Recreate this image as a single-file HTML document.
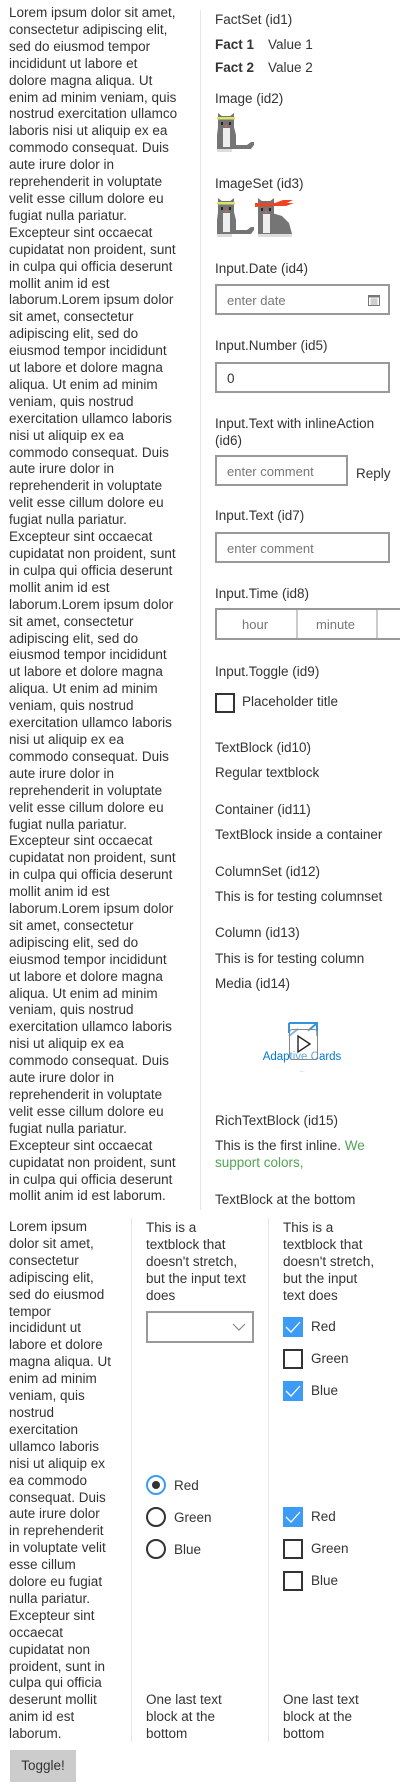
<!DOCTYPE html>
<html><head><meta charset="utf-8">
<style>
*{margin:0;padding:0;box-sizing:border-box}
body{width:400px;height:1792px;background:#fff;position:relative;overflow:hidden;font-family:"Liberation Sans",sans-serif;font-size:13.5px;color:#333;line-height:17px}
.a{position:absolute;white-space:nowrap}
.txt{position:absolute;white-space:nowrap;line-height:16.9px}
.box{position:absolute;border:2px solid #999;background:#fff}
.ph{color:#777;font-size:13px}
.cb{position:absolute;width:20px;height:20px;border:2px solid #333}
.cbc{position:absolute;width:20px;height:20px;background:#3c9cf5}
.rd{position:absolute;width:20px;height:20px;border:2px solid #333;border-radius:50%}
.vl{position:absolute;width:1px;background:#e6e6e6}
</style></head><body>

<div class="txt" style="left:9px;top:5px">Lorem ipsum dolor sit amet,<br>consectetur adipiscing elit,<br>sed do eiusmod tempor<br>incididunt ut labore et<br>dolore magna aliqua. Ut<br>enim ad minim veniam, quis<br>nostrud exercitation ullamco<br>laboris nisi ut aliquip ex ea<br>commodo consequat. Duis<br>aute irure dolor in<br>reprehenderit in voluptate<br>velit esse cillum dolore eu<br>fugiat nulla pariatur.<br>Excepteur sint occaecat<br>cupidatat non proident, sunt<br>in culpa qui officia deserunt<br>mollit anim id est<br>laborum.Lorem ipsum dolor<br>sit amet, consectetur<br>adipiscing elit, sed do<br>eiusmod tempor incididunt<br>ut labore et dolore magna<br>aliqua. Ut enim ad minim<br>veniam, quis nostrud<br>exercitation ullamco laboris<br>nisi ut aliquip ex ea<br>commodo consequat. Duis<br>aute irure dolor in<br>reprehenderit in voluptate<br>velit esse cillum dolore eu<br>fugiat nulla pariatur.<br>Excepteur sint occaecat<br>cupidatat non proident, sunt<br>in culpa qui officia deserunt<br>mollit anim id est<br>laborum.Lorem ipsum dolor<br>sit amet, consectetur<br>adipiscing elit, sed do<br>eiusmod tempor incididunt<br>ut labore et dolore magna<br>aliqua. Ut enim ad minim<br>veniam, quis nostrud<br>exercitation ullamco laboris<br>nisi ut aliquip ex ea<br>commodo consequat. Duis<br>aute irure dolor in<br>reprehenderit in voluptate<br>velit esse cillum dolore eu<br>fugiat nulla pariatur.<br>Excepteur sint occaecat<br>cupidatat non proident, sunt<br>in culpa qui officia deserunt<br>mollit anim id est<br>laborum.Lorem ipsum dolor<br>sit amet, consectetur<br>adipiscing elit, sed do<br>eiusmod tempor incididunt<br>ut labore et dolore magna<br>aliqua. Ut enim ad minim<br>veniam, quis nostrud<br>exercitation ullamco laboris<br>nisi ut aliquip ex ea<br>commodo consequat. Duis<br>aute irure dolor in<br>reprehenderit in voluptate<br>velit esse cillum dolore eu<br>fugiat nulla pariatur.<br>Excepteur sint occaecat<br>cupidatat non proident, sunt<br>in culpa qui officia deserunt<br>mollit anim id est laborum.</div>

<div class="vl" style="left:200px;top:10px;height:1200px"></div>

<div class="a" style="left:215px;top:11px">FactSet (id1)</div>
<div class="a" style="left:215px;top:36px"><b>Fact 1</b></div><div class="a" style="left:268px;top:36px">Value 1</div>
<div class="a" style="left:215px;top:59px"><b>Fact 2</b></div><div class="a" style="left:268px;top:59px">Value 2</div>
<div class="a" style="left:215px;top:90px">Image (id2)</div>
<svg class="a" style="left:215px;top:112px" width="42" height="42" viewBox="0 0 42 42">
<polygon points="3,1 8,5 3,5" fill="#757575"/><polygon points="19,1 14,5 19,5" fill="#757575"/>
<rect x="3" y="4" width="16" height="12" fill="#757575"/>
<path d="M3 15h16l2 8v14h-19v-14z" fill="#757575"/>
<rect x="8" y="16" width="7" height="19" fill="#eee"/>
<path d="M21 33h11l4-3h3v3l-3 4h-15z" fill="#757575"/>
<rect x="2" y="5" width="18" height="2.5" fill="#dce36a"/>
<rect x="6" y="10" width="2" height="3" fill="#222"/><rect x="14" y="10" width="2" height="3" fill="#222"/>
<rect x="10" y="13" width="2" height="2" fill="#e55"/>
<rect x="2" y="37" width="15" height="3" fill="#ddd"/>
</svg>
<div class="a" style="left:215px;top:175px">ImageSet (id3)</div>
<svg class="a" style="left:215px;top:197px" width="42" height="42" viewBox="0 0 42 42">
<polygon points="3,1 8,5 3,5" fill="#757575"/><polygon points="19,1 14,5 19,5" fill="#757575"/>
<rect x="3" y="4" width="16" height="12" fill="#757575"/>
<path d="M3 15h16l2 8v14h-19v-14z" fill="#757575"/>
<rect x="8" y="16" width="7" height="19" fill="#eee"/>
<path d="M21 33h11l4-3h3v3l-3 4h-15z" fill="#757575"/>
<rect x="2" y="5" width="18" height="2.5" fill="#dce36a"/>
<rect x="6" y="10" width="2" height="3" fill="#222"/><rect x="14" y="10" width="2" height="3" fill="#222"/>
<rect x="10" y="13" width="2" height="2" fill="#e55"/>
<rect x="2" y="37" width="15" height="3" fill="#ddd"/>
</svg>
<svg class="a" style="left:254px;top:197px" width="44" height="42" viewBox="0 0 44 42">
<polygon points="4,1 9,5 4,5" fill="#757575"/><polygon points="20,1 15,5 20,5" fill="#757575"/>
<rect x="4" y="4" width="16" height="13" fill="#757575"/>
<path d="M4 16h14l10 3l7 7l3 11h-34z" fill="#757575"/>
<rect x="9" y="17" width="7" height="19" fill="#eee"/>
<path d="M1 6h20l8-3h10l-6 3h7l-8 3h-12l-19 1z" fill="#ee4422"/>
<rect x="7" y="11" width="2" height="3" fill="#222"/><rect x="15" y="11" width="2" height="3" fill="#222"/>
<rect x="11" y="14" width="2" height="2" fill="#e55"/>
<rect x="4" y="37" width="34" height="3" fill="#ddd"/>
</svg>

<div class="a" style="left:215px;top:260px">Input.Date (id4)</div>
<div class="box" style="left:215px;top:284px;width:175px;height:31px"><span class="a ph" style="left:10px;top:6px">enter date</span>
<svg class="a" style="right:8px;top:8px" width="12" height="12" viewBox="0 0 12 12"><rect x="0.5" y="1.5" width="11" height="10" fill="none" stroke="#777"/><rect x="0.5" y="1.5" width="11" height="2" fill="#777"/><path d="M2 6h8M2 8h8M2 10h8M4 4v7M6 4v7M8 4v7" stroke="#999" stroke-width="0.6"/></svg></div>

<div class="a" style="left:215px;top:337px">Input.Number (id5)</div>
<div class="box" style="left:215px;top:362px;width:175px;height:31px"><span class="a" style="left:10px;top:6px">0</span></div>

<div class="a" style="left:215px;top:415px">Input.Text with inlineAction</div>
<div class="a" style="left:215px;top:432px">(id6)</div>
<div class="box" style="left:215px;top:455px;width:133px;height:31px"><span class="a ph" style="left:10px;top:6px">enter comment</span></div>
<div class="a" style="left:356px;top:465px">Reply</div>

<div class="a" style="left:215px;top:507px">Input.Text (id7)</div>
<div class="box" style="left:215px;top:532px;width:175px;height:31px"><span class="a ph" style="left:10px;top:6px">enter comment</span></div>

<div class="a" style="left:215px;top:585px">Input.Time (id8)</div>
<div class="box" style="left:215px;top:608px;width:190px;height:32px;border-right:none"><span class="a ph" style="left:25px;top:6px">hour</span><span class="a" style="left:79px;top:0;width:2px;height:28px;background:#ccc"></span><span class="a ph" style="left:99px;top:6px">minute</span><span class="a" style="left:159px;top:0;width:2px;height:28px;background:#ccc"></span></div>

<div class="a" style="left:215px;top:663px">Input.Toggle (id9)</div>
<div class="cb" style="left:215px;top:693px"></div>
<div class="a" style="left:242px;top:693px">Placeholder title</div>

<div class="a" style="left:215px;top:739px">TextBlock (id10)</div>
<div class="a" style="left:215px;top:764px">Regular textblock</div>
<div class="a" style="left:215px;top:801px">Container (id11)</div>
<div class="a" style="left:215px;top:826px">TextBlock inside a container</div>
<div class="a" style="left:215px;top:863px">ColumnSet (id12)</div>
<div class="a" style="left:215px;top:888px">This is for testing columnset</div>
<div class="a" style="left:215px;top:924px">Column (id13)</div>
<div class="a" style="left:215px;top:950px">This is for testing column</div>
<div class="a" style="left:215px;top:975px">Media (id14)</div>
<svg class="a" style="left:260px;top:1020px" width="85" height="56" viewBox="0 0 85 56">
<path d="M29 3h28v13M29 3v10M57 3l-9 8M29 16l9 -7" stroke="#0078d4" stroke-width="2" fill="none" opacity="0.8"/>
<text x="42" y="40" text-anchor="middle" font-family="Liberation Sans" font-size="11.5" fill="#0078d4">Adaptive Cards</text>
<text x="42" y="52" text-anchor="middle" font-family="Liberation Sans" font-size="3.5" fill="#0078d4">.....</text>
<rect x="29.5" y="9.5" width="28" height="30" rx="3" fill="rgba(255,255,255,0.35)" stroke="#888"/>
<path d="M38 16v16l12-8z" fill="none" stroke="#222" stroke-width="1.4"/>
</svg>

<div class="a" style="left:215px;top:1112px">RichTextBlock (id15)</div>
<div class="a" style="left:215px;top:1137px">This is the first inline. <span style="color:#54a254">We</span></div>
<div class="a" style="left:215px;top:1154px;color:#54a254">support colors,</div>
<div class="a" style="left:215px;top:1191px">TextBlock at the bottom</div>

<div class="txt" style="left:9px;top:1219px">Lorem ipsum<br>dolor sit amet,<br>consectetur<br>adipiscing elit,<br>sed do eiusmod<br>tempor<br>incididunt ut<br>labore et dolore<br>magna aliqua. Ut<br>enim ad minim<br>veniam, quis<br>nostrud<br>exercitation<br>ullamco laboris<br>nisi ut aliquip ex<br>ea commodo<br>consequat. Duis<br>aute irure dolor<br>in reprehenderit<br>in voluptate velit<br>esse cillum<br>dolore eu fugiat<br>nulla pariatur.<br>Excepteur sint<br>occaecat<br>cupidatat non<br>proident, sunt in<br>culpa qui officia<br>deserunt mollit<br>anim id est<br>laborum.</div>

<div class="vl" style="left:131px;top:1218px;height:524px"></div>
<div class="vl" style="left:268px;top:1218px;height:524px"></div>

<div class="txt" style="left:146px;top:1220px">This is a<br>textblock that<br>doesn't stretch,<br>but the input text<br>does</div>
<div class="box" style="left:146px;top:1311px;width:108px;height:32px">
<svg class="a" style="left:84px;top:10px" width="14" height="8" viewBox="0 0 14 8"><path d="M1 1l6 6 6-6" stroke="#888" fill="none" stroke-width="1.2"/></svg></div>

<div class="rd" style="left:146px;top:1475px;border-color:#3c9cf5"><span class="a" style="left:4px;top:4px;width:8px;height:8px;border-radius:50%;background:#333"></span></div>
<div class="a" style="left:174px;top:1477px">Red</div>
<div class="rd" style="left:146px;top:1507px"></div><div class="a" style="left:174px;top:1509px">Green</div>
<div class="rd" style="left:146px;top:1539px"></div><div class="a" style="left:174px;top:1541px">Blue</div>
<div class="txt" style="left:146px;top:1692px">One last text<br>block at the<br>bottom</div>

<div class="txt" style="left:283px;top:1220px">This is a<br>textblock that<br>doesn't stretch,<br>but the input<br>text does</div>
<div class="cbc" style="left:283px;top:1317px"><svg width="20" height="20"><path d="M3 10l5 5 9-10" stroke="#fff" fill="none" stroke-width="1.3"/></svg></div><div class="a" style="left:311px;top:1318px">Red</div>
<div class="cb" style="left:283px;top:1349px"></div><div class="a" style="left:311px;top:1350px">Green</div>
<div class="cbc" style="left:283px;top:1381px"><svg width="20" height="20"><path d="M3 10l5 5 9-10" stroke="#fff" fill="none" stroke-width="1.3"/></svg></div><div class="a" style="left:311px;top:1382px">Blue</div>

<div class="cbc" style="left:283px;top:1507px"><svg width="20" height="20"><path d="M3 10l5 5 9-10" stroke="#fff" fill="none" stroke-width="1.3"/></svg></div><div class="a" style="left:311px;top:1508px">Red</div>
<div class="cb" style="left:283px;top:1539px"></div><div class="a" style="left:311px;top:1540px">Green</div>
<div class="cb" style="left:283px;top:1571px"></div><div class="a" style="left:311px;top:1572px">Blue</div>
<div class="txt" style="left:283px;top:1692px">One last text<br>block at the<br>bottom</div>

<div class="a" style="left:10px;top:1750px;width:66px;height:32px;background:#ccc;text-align:center;line-height:32px">Toggle!</div>
</body></html>
